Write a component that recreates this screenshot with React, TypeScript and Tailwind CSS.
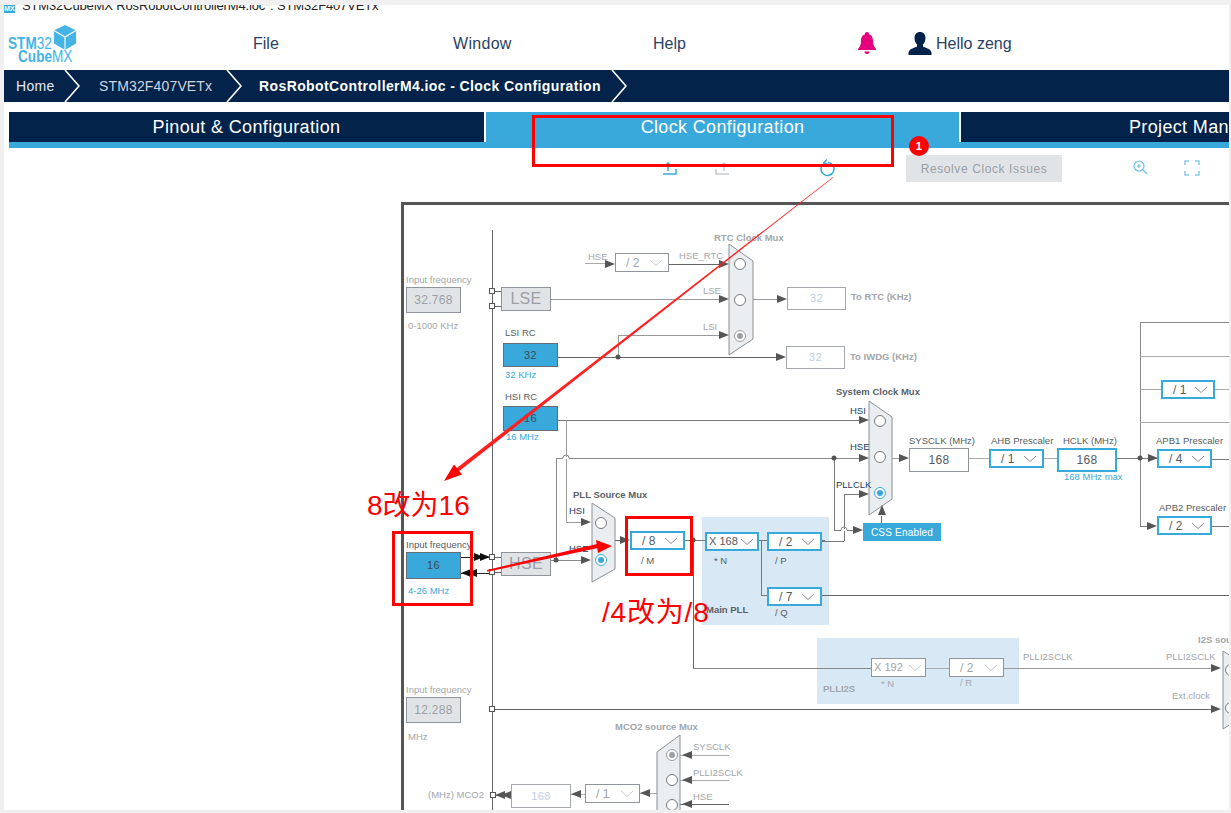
import React from "react";

// diagram items are given in page coordinates, the frame starts at 404,205
const OX = 404;
const OY = 205;

const pos = (x: number, y: number, w?: number, h?: number) => ({
  left: x - OX,
  top: y - OY,
  width: w,
  height: h,
});

const labelStyles = {
  gray: "text-[9.5px] text-[#a3a6aa]",
  grayBold: "text-[9.5px] font-bold text-[#a3a6aa]",
  dark: "text-[9.5px] text-[#555b62]",
  darkBold: "text-[9.5px] font-bold text-[#5a5f66]",
  navy: "text-[9.5px] text-[#1d3b66]",
  blue: "text-[9.5px] text-[#39a9dc]",
};

type LabelKind = keyof typeof labelStyles;

const labels: [string, number, number, LabelKind][] = [
  ["RTC Clock Mux", 714, 238, "grayBold"],
  ["HSE", 588, 257, "gray"],
  ["HSE_RTC", 679, 256, "gray"],
  ["LSE", 703, 291, "gray"],
  ["LSI", 703, 327, "gray"],
  ["Input frequency", 406, 280, "gray"],
  ["0-1000 KHz", 408, 326, "gray"],
  ["To RTC (KHz)", 851, 297, "grayBold"],
  ["To IWDG (KHz)", 850, 357, "grayBold"],
  ["LSI RC", 505, 333, "dark"],
  ["32 KHz", 505, 375, "blue"],
  ["HSI RC", 505, 397, "dark"],
  ["16 MHz", 506, 437, "blue"],
  ["System Clock Mux", 836, 392, "darkBold"],
  ["HSI", 850, 411, "navy"],
  ["HSE", 850, 447, "navy"],
  ["PLLCLK", 836, 485, "navy"],
  ["SYSCLK (MHz)", 909, 441, "dark"],
  ["AHB Prescaler", 991, 441, "dark"],
  ["HCLK (MHz)", 1063, 441, "dark"],
  ["168 MHz max", 1064, 477, "blue"],
  ["APB1 Prescaler", 1156, 441, "dark"],
  ["APB2 Prescaler", 1159, 508, "dark"],
  ["PLL Source Mux", 573, 495, "darkBold"],
  ["HSI", 569, 511, "navy"],
  ["HSE", 569, 549, "navy"],
  ["Input frequency", 406, 545, "dark"],
  ["4-26 MHz", 408, 591, "blue"],
  ["/ M", 641, 561, "dark"],
  ["* N", 714, 561, "dark"],
  ["/ P", 775, 561, "dark"],
  ["/ Q", 775, 613, "dark"],
  ["Main PLL", 706, 610, "darkBold"],
  ["* N", 881, 684, "gray"],
  ["/ R", 960, 683, "gray"],
  ["PLLI2S", 823, 689, "grayBold"],
  ["PLLI2SCLK", 1023, 657, "gray"],
  ["PLLI2SCLK", 1166, 657, "gray"],
  ["Ext.clock", 1172, 696, "gray"],
  ["I2S source Mux", 1198, 640, "grayBold"],
  ["Input frequency", 406, 690, "gray"],
  ["MHz", 408, 737, "gray"],
  ["MCO2 source Mux", 615, 727, "grayBold"],
  ["SYSCLK", 693, 747, "gray"],
  ["PLLI2SCLK", 693, 773, "gray"],
  ["HSE", 693, 797, "gray"],
  ["(MHz) MCO2", 428, 795, "gray"],
];

const boxStyles = {
  source: "bg-[#39a9dc] border border-[#666c72] text-[#3c4a55] text-[11px]",
  off: "bg-[#e1e4e7] border border-[#8f959b] text-[#9a9fa5] text-[12px]",
  offBig: "bg-[#e1e4e7] border border-[#8f959b] text-[#9a9fa5] text-[16px]",
  output: "bg-white border border-[#8f959b] text-[#555b62] text-[12px]",
  outputOff: "bg-white border border-[#a5a9ae] text-[#b8d0e8] text-[11px]",
  active: "bg-white border-2 border-[#39a9dc] text-[#555b62] text-[12px]",
};

type BoxKind = keyof typeof boxStyles;

const boxes: [string, number, number, number, number, BoxKind][] = [
  ["32.768", 406, 287, 55, 26, "off"],
  ["LSE", 501, 287, 50, 24, "offBig"],
  ["32", 503, 343, 55, 24, "source"],
  ["16", 503, 406, 55, 25, "source"],
  ["32", 787, 287, 59, 23, "outputOff"],
  ["32", 786, 346, 59, 23, "outputOff"],
  ["168", 909, 448, 60, 24, "output"],
  ["168", 1057, 448, 60, 24, "active"],
  ["16", 406, 552, 55, 27, "source"],
  ["HSE", 501, 552, 50, 24, "offBig"],
  ["12.288", 406, 697, 55, 26, "off"],
  ["168", 511, 784, 60, 24, "outputOff"],
];

const selects: [string, number, number, number, boolean][] = [
  ["/ 2", 615, 253, 54, false],
  ["/ 1", 1161, 380, 54, true],
  ["/ 1", 989, 449, 55, true],
  ["/ 4", 1157, 449, 55, true],
  ["/ 2", 1157, 516, 55, true],
  ["/ 8", 630, 531, 55, true],
  ["X 168", 705, 532, 54, true],
  ["/ 2", 767, 532, 55, true],
  ["/ 7", 767, 587, 55, true],
  ["X 192", 871, 658, 55, false],
  ["/ 2", 949, 658, 55, false],
  ["/ 1", 585, 784, 55, false],
];

// [x1,y1,x2,y2,color]
const wires: [number, number, number, number, string][] = [
  [492, 230, 492, 810, "#666"],
  [495, 291, 501, 291, "#666"],
  [495, 306, 501, 306, "#666"],
  [585, 263, 606, 263, "#aaa"],
  [669, 264, 720, 264, "#666"],
  [551, 299, 720, 299, "#999"],
  [753, 299, 778, 299, "#999"],
  [558, 357, 778, 357, "#666"],
  [618, 357, 618, 335, "#999"],
  [618, 335, 720, 335, "#999"],
  [558, 420, 860, 420, "#777"],
  [566, 420, 566, 522, "#999"],
  [566, 522, 583, 522, "#999"],
  [556, 458, 860, 458, "#888"],
  [556, 458, 556, 560, "#888"],
  [551, 560, 583, 560, "#888"],
  [615, 540, 624, 540, "#666"],
  [684, 540, 705, 540, "#777"],
  [693, 540, 693, 668, "#666"],
  [693, 668, 871, 668, "#888"],
  [926, 668, 949, 668, "#aaa"],
  [1003, 668, 1213, 668, "#999"],
  [495, 709, 1213, 709, "#666"],
  [759, 540, 767, 540, "#777"],
  [761, 540, 761, 595, "#777"],
  [761, 595, 767, 595, "#777"],
  [821, 540, 825, 540, "#777"],
  [822, 595, 1229, 595, "#666"],
  [821, 541, 844, 541, "#777"],
  [844, 541, 844, 494, "#777"],
  [844, 494, 860, 494, "#777"],
  [834, 458, 834, 530, "#777"],
  [834, 530, 855, 530, "#777"],
  [881, 516, 881, 523, "#666"],
  [892, 458, 902, 458, "#999"],
  [969, 458, 989, 458, "#aaa"],
  [1044, 458, 1057, 458, "#aaa"],
  [1117, 458, 1157, 458, "#777"],
  [1140, 322, 1140, 526, "#888"],
  [1140, 322, 1229, 322, "#888"],
  [1140, 356, 1229, 356, "#aaa"],
  [1140, 389, 1161, 389, "#aaa"],
  [1215, 389, 1229, 389, "#aaa"],
  [1140, 422, 1229, 422, "#aaa"],
  [1140, 526, 1150, 526, "#777"],
  [1212, 459, 1229, 459, "#777"],
  [1212, 526, 1229, 526, "#777"],
  [461, 557, 489, 557, "#222"],
  [461, 573, 489, 573, "#222"],
  [495, 557, 501, 557, "#666"],
  [495, 572, 501, 572, "#666"],
  [680, 755, 729, 755, "#aaa"],
  [680, 780, 729, 780, "#aaa"],
  [680, 804, 729, 804, "#666"],
  [640, 793, 657, 793, "#aaa"],
  [571, 794, 585, 794, "#aaa"],
  [495, 795, 511, 795, "#666"],
];

// where one wire jumps over another
const hops: [number, number][] = [
  [566, 458],
  [844, 530],
];

// tip x, tip y, direction
const arrows: [number, number, "r" | "l" | "u", string?][] = [
  [615, 264, "r"],
  [729, 264, "r"],
  [729, 299, "r"],
  [787, 299, "r"],
  [729, 335, "r"],
  [786, 357, "r"],
  [869, 420, "r"],
  [869, 458, "r"],
  [869, 494, "r"],
  [863, 530, "r"],
  [882, 505, "u"],
  [909, 458, "r"],
  [1158, 458, "r"],
  [1157, 526, "r"],
  [591, 522, "r"],
  [591, 560, "r"],
  [630, 540, "r"],
  [1221, 668, "r"],
  [1221, 709, "r"],
  [484, 557, "r", "#111"],
  [490, 557, "r", "#111"],
  [461, 573, "l", "#111"],
  [467, 573, "l", "#111"],
  [682, 755, "l"],
  [682, 780, "l"],
  [682, 804, "l"],
  [640, 793, "l"],
  [571, 794, "l"],
  [495, 795, "l"],
  [501, 795, "l"],
];

const dots: [number, number][] = [
  [618, 357],
  [834, 458],
  [1140, 458],
  [556, 560],
  [693, 540],
];

const junctions: [number, number][] = [
  [492, 291],
  [492, 306],
  [492, 557],
  [492, 572],
  [492, 709],
  [493, 795],
];

const muxes: [string, string][] = [
  ["729,244 753,261 753,339 729,355", "a"],
  ["869,401 892,417 892,499 869,515", "b"],
  ["592,503 615,518 615,569 592,582", "c"],
  ["1223,651 1245,665 1245,715 1223,729", "d"],
  ["680,735 657,752 657,830 680,830", "e"],
];

// x, y, selected colour
const radios: [number, number, string?][] = [
  [740, 264],
  [740, 300],
  [740, 336, "#9a9fa5"],
  [880, 421],
  [880, 457],
  [880, 493, "#39a9dc"],
  [601, 523],
  [601, 560, "#39a9dc"],
  [1231, 670],
  [1231, 708],
  [672, 755, "#9a9fa5"],
  [672, 780],
  [672, 805],
];

function Chevron({ active }: { active: boolean }) {
  return (
    <svg width="14" height="8" viewBox="0 0 14 8" fill="none" stroke={active ? "#8a9096" : "#c4c7cb"} strokeWidth="1" className="shrink-0">
      <path d="M1 1l6 5.5L13 1" />
    </svg>
  );
}

function Diagram() {
  return (
    <>
      <svg width="1231" height="813" className="absolute left-[-404px] top-[-205px]">
        {wires.map(([x1, y1, x2, y2, c], i) => (
          <line key={i} x1={x1} y1={y1} x2={x2} y2={y2} stroke={c} strokeWidth="1" shapeRendering="crispEdges" />
        ))}
        {hops.map(([x, y], i) => (
          <g key={i}>
            <line x1={x - 3} y1={y} x2={x + 3} y2={y} stroke="#fff" strokeWidth="2" />
            <path d={`M${x - 3} ${y}a3 3 0 0 1 6 0`} fill="none" stroke="#888" strokeWidth="1" />
          </g>
        ))}
        {muxes.map(([points, k]) => (
          <polygon key={k} points={points} fill="#ebeef1" stroke="#8a9096" strokeWidth="1" />
        ))}
        {arrows.map(([x, y, d, c], i) => (
          <polygon
            key={i}
            fill={c || "#555"}
            points={
              d === "r"
                ? `${x},${y} ${x - 10},${y - 4} ${x - 10},${y + 4}`
                : d === "l"
                ? `${x},${y} ${x + 10},${y - 4} ${x + 10},${y + 4}`
                : `${x},${y} ${x - 4},${y + 10} ${x + 4},${y + 10}`
            }
          />
        ))}
        {dots.map(([x, y], i) => (
          <circle key={i} cx={x} cy={y} r="2.5" fill="#555" />
        ))}
        {radios.map(([x, y, c], i) => (
          <g key={i}>
            <circle cx={x} cy={y} r="5.5" fill="#fff" stroke={c || "#777"} strokeWidth="1" />
            {c && <circle cx={x} cy={y} r="3" fill={c} />}
          </g>
        ))}
        {junctions.map(([x, y], i) => (
          <rect key={i} x={x - 2.5} y={y - 2.5} width="5" height="5" fill="#fff" stroke="#555" strokeWidth="1" />
        ))}
      </svg>

      {boxes.map(([text, x, y, w, h, kind], i) => (
        <div
          key={i}
          style={pos(x, y, w, h)}
          className={"absolute flex items-center justify-center tracking-[0.3px] " + boxStyles[kind]}
        >
          {text}
        </div>
      ))}

      {selects.map(([text, x, y, w, active], i) => (
        <div
          key={i}
          style={pos(x, y, w, 19)}
          className={
            "absolute flex items-center justify-between whitespace-nowrap bg-white " +
            (text.startsWith("X") ? "pl-[2px] pr-[3px] text-[11px] " : "pl-[10px] pr-[5px] text-[12px] ") +
            (active ? "border-2 border-[#39a9dc] text-[#555b62]" : "border border-[#8f959b] text-[#a0a4a9]")
          }
        >
          <span>{text}</span>
          <Chevron active={active} />
        </div>
      ))}

      <div
        style={pos(863, 523, 78, 18)}
        className="absolute flex items-center justify-center bg-[#39a9dc] text-[10px] tracking-[0.2px] text-white"
      >
        CSS Enabled
      </div>

      {labels.map(([text, x, y, kind], i) => (
        <span
          key={i}
          style={pos(x, y - 6)}
          className={"absolute whitespace-nowrap leading-[12px] " + labelStyles[kind]}
        >
          {text}
        </span>
      ))}
    </>
  );
}

function Logo() {
  return (
    <div className="relative h-[46px] w-[76px]">
      <svg width="24" height="25" viewBox="0 0 26 27" className="absolute left-[46px] top-[4px]">
        <polygon points="13,0 25,6 25,20 13,27 1,20 1,6" fill="#45b3e4" />
        <path d="M1 6l12 7 12-7M13 13v14" stroke="#fff" strokeWidth="1.2" fill="none" />
      </svg>
      <span className="absolute left-[1px] top-[15px] origin-left scale-x-[0.8] whitespace-nowrap text-[17px] leading-[16px] text-[#45b3e4]">
        <b>STM</b>32
      </span>
      <span className="absolute left-[11px] top-[28px] origin-left scale-x-[0.8] whitespace-nowrap text-[17px] leading-[16px] text-[#45b3e4]">
        <b>Cube</b>MX
      </span>
    </div>
  );
}

function BreadcrumbChevron() {
  return (
    <svg width="16" height="32" viewBox="0 0 16 32" fill="none" stroke="#fff" strokeWidth="1.6" className="shrink-0">
      <path d="M1 0l14 16L1 32" />
    </svg>
  );
}

function Annotations() {
  return (
    <div className="pointer-events-none absolute left-[-4px] top-[-5px] h-[813px] w-[1231px]">
      <div className="absolute left-[532px] top-[115px] h-[52px] w-[362px] border-[3px] border-[#ff0000]" />
      <div className="absolute left-[392px] top-[531px] h-[75px] w-[81px] border-[3px] border-[#ff0000]" />
      <div className="absolute left-[625px] top-[516px] h-[60px] w-[68px] border-[3px] border-[#ff0000]" />
      <svg width="1231" height="813" className="absolute left-0 top-0">
        <polygon points="833,177 833.3,177.4 458,472 455.5,469" fill="#ff2020" />
        <polygon points="444,481 454,464.5 462,474.5" fill="#ff0000" />
        <polygon points="487,570 487.4,571.8 598,548 597,544" fill="#ff0000" />
        <polygon points="612,546 596,540 598,553" fill="#ff0000" />
      </svg>
      <span className="absolute left-[367px] top-[489px] whitespace-nowrap font-['Liberation_Sans','Noto_Sans_CJK_SC',sans-serif] text-[28px] leading-[34px] text-[#ff0000]">
        8改为16
      </span>
      <span className="absolute left-[602px] top-[596px] whitespace-nowrap font-['Liberation_Sans','Noto_Sans_CJK_SC',sans-serif] text-[28px] leading-[34px] tracking-[0.8px] text-[#ff0000]">
        /4改为/8
      </span>
    </div>
  );
}

export default function App() {
  return (
    <div className="h-[813px] w-[1231px] overflow-hidden bg-[#f0f0f0] pb-[3px] pl-[4px] pr-[2px] pt-[5px] font-['Liberation_Sans',sans-serif]">
      <div className="relative flex h-full flex-col overflow-hidden bg-white">
        {/* window title, cut off at the top */}
        <div className="relative h-[8px] shrink-0 overflow-hidden">
          <div className="absolute left-0 top-0 flex h-[8px] w-[11px] items-center justify-center bg-[#39a9dc] text-[7px] font-bold text-white">
            MX
          </div>
          <span className="absolute left-[18px] top-[-7px] whitespace-nowrap text-[13px] leading-[15px] tracking-[-0.15px] text-[#222]">
            STM32CubeMX RosRobotControllerM4.ioc*: STM32F407VETx
          </span>
        </div>

        <div className="flex h-[57px] shrink-0 items-center pl-[3px] pt-[4px] text-[16px] text-[#2b3f63]">
          <Logo />
          <div className="ml-[170px] flex w-[400px]">
            <span className="w-[200px]">File</span>
            <span className="w-[200px] tracking-[0.3px]">Window</span>
          </div>
          <span className="w-[204px]">Help</span>
          <svg width="20" height="22" viewBox="0 0 20 22" fill="#e6007e" className="mb-px">
            <path d="M10 0a2 2 0 0 1 2 2.2C15 3 16 6 16 9c0 4 1 5.500 3 8v1H1v-1c2-2.500 3-4 3-8 0-3 1-6 4-6.800A2 2 0 0 1 10 0zM7.500 19.500h5a2.500 2.500 0 0 1-5 0z" />
          </svg>
          <svg width="24" height="23" viewBox="0 0 24 23" fill="#03234b" className="ml-[31px]">
            <path d="M12 0c3.500 0 5.500 2.500 5.500 6 0 2.500-1 5-2.500 6.500v2c1 1 8 2 8.500 6V23H.5v-2.500c.5-4 7.500-5 8.500-6v-2C7.500 11 6.500 8.500 6.500 6c0-3.500 2-6 5.500-6z" />
          </svg>
          <span className="ml-[4px]">Hello zeng</span>
        </div>

        <div className="flex h-[32px] shrink-0 items-center bg-[#03234b] text-[14px] text-white">
          <span className="ml-[12px] w-[48px] tracking-[0.3px] text-[#e4e8ee]">Home</span>
          <BreadcrumbChevron />
          <span className="ml-[19px] w-[127px] tracking-[0.15px] text-[#cfd6df]">STM32F407VETx</span>
          <BreadcrumbChevron />
          <span className="ml-[17px] w-[352px] whitespace-nowrap font-bold tracking-[0.4px]">
            RosRobotControllerM4.ioc - Clock Configuration
          </span>
          <BreadcrumbChevron />
        </div>

        <div className="mt-[10px] flex h-[36px] shrink-0 pl-[5px] text-[18px] tracking-[0.35px] text-white">
          <div className="flex w-[1220px] border-b-[6px] border-[#39a9dc]">
            <div className="flex h-[30px] w-[475px] items-center justify-center bg-[#03234b]">Pinout &amp; Configuration</div>
            <div className="h-[30px] w-[2px] bg-white" />
            <div className="flex h-[30px] w-[473px] items-center justify-center bg-[#39a9dc]">Clock Configuration</div>
            <div className="h-[30px] w-[2px] bg-white" />
            <div className="flex h-[30px] flex-1 items-center overflow-hidden whitespace-nowrap bg-[#03234b] pl-[168px]">
              Project Manager
            </div>
          </div>
        </div>

        {/* toolbar */}
        <div className="flex h-[54px] shrink-0 items-start pl-[658px] pt-[7px]">
          <svg width="16" height="16" viewBox="0 0 16 16" fill="none" stroke="#39a9dc" strokeWidth="1.500" className="mt-[5px]">
            <path d="M1 14h13V9M6 11V3M4 5l2-2 2 2" />
          </svg>
          <svg width="16" height="16" viewBox="0 0 16 16" fill="none" stroke="#c8cbce" strokeWidth="1.500" className="ml-[37px] mt-[5px]">
            <path d="M14 14H1V9M9 11V3M7 5l2-2 2 2" />
          </svg>
          <svg width="18" height="18" viewBox="0 0 18 18" fill="none" stroke="#39a9dc" strokeWidth="1.500" className="ml-[88px] mt-[4px]">
            <path d="M5 4.500a6.500 6.500 0 1 0 4-1M8 0.500l-3 3 3.500 2" />
          </svg>
          <div className="relative ml-[69px] flex h-[27px] w-[156px] items-center justify-center bg-[#e1e4e7] text-[12px] tracking-[0.6px] text-[#9a9fa5]">
            Resolve Clock Issues
            <div className="absolute left-[3px] top-[-19px] flex h-[20px] w-[20px] items-center justify-center rounded-full bg-[#ff0000] text-[11px] font-bold text-white">
              1
            </div>
          </div>
          <svg width="18" height="18" viewBox="0 0 18 18" fill="none" stroke="#6cbfe6" strokeWidth="1.200" className="ml-[69px] mt-[4px]">
            <circle cx="8" cy="7" r="5" />
            <path d="M12 11l4 4M8 5v4M6 7h4" />
          </svg>
          <svg width="16" height="16" viewBox="0 0 16 16" fill="none" stroke="#8ccbea" strokeWidth="1.500" className="ml-[35px] mt-[5px]">
            <path d="M1 5V1h4M11 1h4v4M15 11v4h-4M5 15H1v-4" />
          </svg>
        </div>

        {/* clock tree, frame drawn on top and left only */}
        <div className="relative ml-[397px] flex-1 border-l-[3px] border-t-[3px] border-[#555]">
          <div style={pos(702, 517, 127, 108)} className="absolute bg-[#d9e8f5]" />
          <div style={pos(817, 638, 202, 66)} className="absolute bg-[#d9e8f5]" />
          <div className="absolute left-0 top-0">
            <Diagram />
          </div>
        </div>

        <Annotations />
      </div>
    </div>
  );
}
